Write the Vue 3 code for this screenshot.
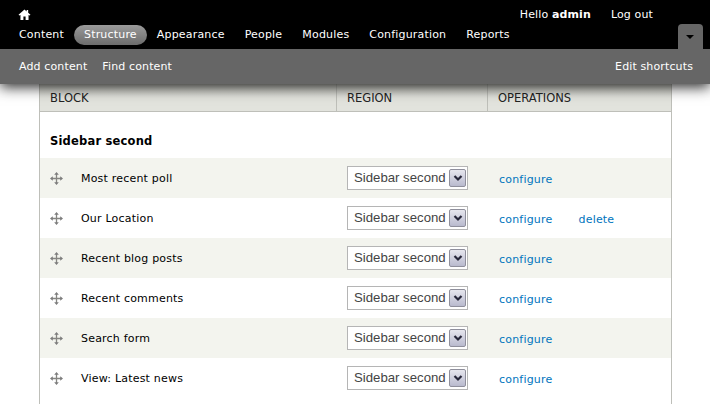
<template>
  <div class="page">
    <div class="toolbar">
      <div class="bar-black">
        <div class="top-row">
          <svg class="home" width="13" height="11" viewBox="0 0 14 12">
            <path d="M7 0.5 L0.5 6.4 L1.3 7.2 L2.6 6.6 L2.6 12 L5.8 12 L5.8 8.2 L8.2 8.2 L8.2 12 L11.4 12 L11.4 6.6 L12.7 7.2 L13.5 6.4 L11 4.1 L11 1.2 L9.3 1.2 L9.3 2.6 Z" fill="#fff" />
          </svg>
          <div class="user">
            <span>Hello <strong>admin</strong></span>
            <span>Log out</span>
          </div>
        </div>
        <div class="menu-row">
          <a
            v-for="item in menu"
            :key="item"
            class="menu-item"
            :class="{ active: item === 'Structure' }"
          >{{ item }}</a>
        </div>
        <div class="toggle"><span class="arrow"></span></div>
      </div>
      <div class="bar-gray">
        <div class="shortcuts">
          <span>Add content</span>
          <span>Find content</span>
        </div>
        <span>Edit shortcuts</span>
      </div>
    </div>

    <div class="content">
      <div class="blocks">
        <div class="row head">
          <div class="col-block">BLOCK</div>
          <div class="col-region">REGION</div>
          <div class="col-ops">OPERATIONS</div>
        </div>
        <div class="section">Sidebar second</div>
        <div
          v-for="(block, index) in blocks"
          :key="block.name"
          class="row item"
          :class="{ odd: index % 2 === 0 }"
        >
          <div class="col-block">
            <svg class="drag" width="13" height="13" viewBox="0 0 13 13">
              <path d="M6.5 1.5 V11.5 M1.5 6.5 H11.5" stroke="#858581" stroke-width="1.3" fill="none" />
              <path d="M6.5 0 L8.8 2.8 H4.2 Z M6.5 13 L8.8 10.2 H4.2 Z M0 6.5 L2.8 4.2 V8.8 Z M13 6.5 L10.2 4.2 V8.8 Z" fill="#7c7c7c" />
            </svg>
            <span>{{ block.name }}</span>
          </div>
          <div class="col-region">
            <div class="select">
              <span>Sidebar second</span>
              <span class="select-btn">
                <svg width="10" height="8" viewBox="0 0 10 8">
                  <path d="M1.5 2 L5 5.5 L8.5 2" stroke="#26263a" stroke-width="2.2" fill="none" />
                </svg>
              </span>
            </div>
          </div>
          <div class="col-ops">
            <a class="link">configure</a>
            <a v-if="block.remove" class="link">delete</a>
          </div>
        </div>
      </div>
    </div>
  </div>
</template>

<script setup>
const menu = ["Content", "Structure", "Appearance", "People", "Modules", "Configuration", "Reports"];

const blocks = [
  { name: "Most recent poll" },
  { name: "Our Location", remove: true },
  { name: "Recent blog posts" },
  { name: "Recent comments" },
  { name: "Search form" },
  { name: "View: Latest news" },
];
</script>

<style>
html,
body {
  margin: 0;
  background: #fff;
  overflow: hidden;
}
</style>

<style scoped>
.page {
  width: 710px;
  height: 404px;
  overflow: hidden;
  position: relative;
  font-family: "DejaVu Sans", Verdana, sans-serif;
  font-size: 11px;
  letter-spacing: 0.2px;
  color: #000;
}

.toolbar {
  position: relative;
  z-index: 2;
  color: #fff;
  letter-spacing: 0.13px;
  box-shadow: 0 3px 13px rgba(0, 0, 0, 0.85);
}

.bar-black {
  position: relative;
  height: 49px;
  background: #000;
  box-sizing: border-box;
  padding: 0 19px;
}

.top-row {
  display: flex;
  justify-content: space-between;
  height: 24px;
  align-items: center;
}

.home {
  margin-top: 4px;
  margin-left: -1px;
}

.user {
  display: flex;
  gap: 20px;
  margin-right: 38px;
  margin-top: 5px;
}

.menu-row {
  display: flex;
  margin-left: -10px;
  margin-top: 1px;
  letter-spacing: 0.18px;
}

.menu-item {
  padding: 0 10px;
  height: 20px;
  line-height: 20px;
  border-radius: 10px;
}

.menu-item.active {
  background: linear-gradient(#9a9a9a, #6c6c6c);
}

.toggle {
  position: absolute;
  top: 24px;
  right: 7px;
  width: 25px;
  height: 25px;
  background: #666;
  border-radius: 4px 4px 0 0;
}

.arrow {
  position: absolute;
  left: 8px;
  top: 11px;
  border-style: solid;
  border-width: 4px 4px 0;
  border-color: #000 transparent transparent;
}

.bar-gray {
  height: 35px;
  background: #666;
  box-sizing: border-box;
  padding: 0 17px 0 19px;
  display: flex;
  justify-content: space-between;
  align-items: center;
}

.shortcuts {
  display: flex;
  gap: 15px;
}

.content {
  padding: 0 38px 0 39px;
}

.blocks {
  border-left: 1px solid #bebfb9;
  border-right: 1px solid #bebfb9;
  min-height: 320px;
}

.row {
  display: flex;
  align-items: center;
}

.col-block {
  width: 296px;
  box-sizing: border-box;
  padding-left: 10px;
  display: flex;
  align-items: center;
}

.col-region {
  width: 151px;
  box-sizing: border-box;
  padding-left: 11px;
}

.col-ops {
  flex: 1;
  padding-left: 12px;
  display: flex;
  gap: 26px;
}

.head {
  height: 28px;
  box-sizing: border-box;
  background: linear-gradient(#cfd0c9, #e2e3dd 50%);
  border-bottom: 1px solid #bebfb9;
  color: #222;
  font-size: 11.5px;
  letter-spacing: 0;
  align-items: stretch;
}

.head .col-block,
.head .col-region,
.head .col-ops {
  display: flex;
  align-items: center;
}

.head .col-region,
.head .col-ops {
  border-left: 1px solid #bebfb9;
  padding-left: 10px;
}

.section {
  height: 46px;
  box-sizing: border-box;
  padding: 21px 0 0 10px;
  font-size: 11.5px;
  font-weight: bold;
  line-height: 16px;
}

.item {
  height: 40px;
}

.item.odd {
  background: #f3f4ee;
}

.drag {
  margin-right: 18px;
  margin-top: 1px;
}

.select {
  width: 121px;
  height: 24px;
  box-sizing: border-box;
  background: #fff;
  border: 1px solid #b5b5b5;
  display: flex;
  align-items: center;
  justify-content: space-between;
  padding: 0 1px 0 6px;
  font-family: "Liberation Sans", Arial, sans-serif;
  font-size: 13.2px;
  letter-spacing: 0;
  color: #444;
}

.select span:first-child {
  margin-top: -2px;
}

.select-btn {
  width: 17px;
  height: 18px;
  box-sizing: border-box;
  border: 1px solid #8f8f9c;
  border-radius: 2px;
  background: linear-gradient(#e6e6ee, #b9bace);
  display: flex;
  align-items: center;
  justify-content: center;
}

.link {
  color: #0074bd;
  margin-top: 2px;
}
</style>
